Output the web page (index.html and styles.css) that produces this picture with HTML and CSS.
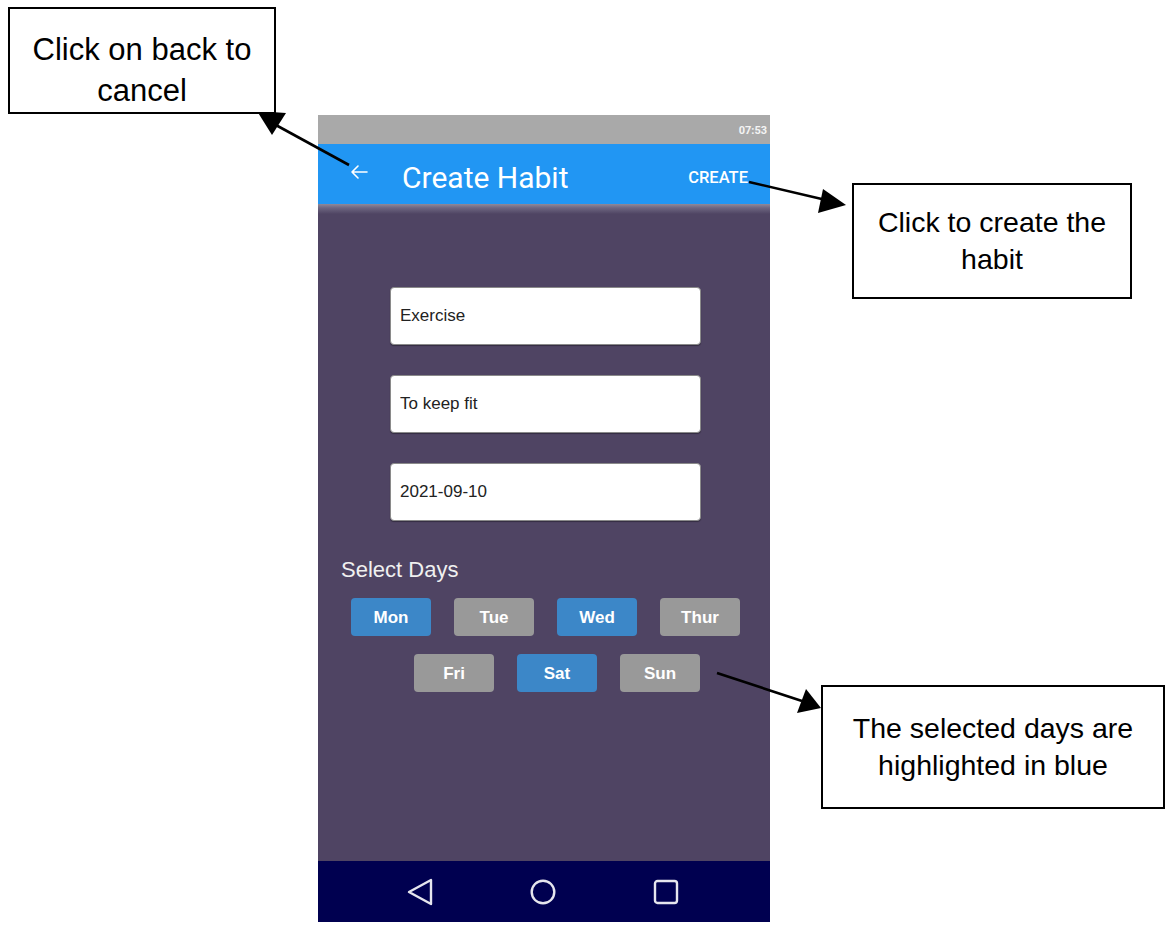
FILE: index.html
```html
<!DOCTYPE html>
<html>
<head>
<meta charset="utf-8">
<link rel="stylesheet" href="styles.css">
</head>
<body>
<div class="stage">
  <div class="phone">
    <div class="statusbar"><span class="time">07:53</span></div>
    <div class="appbar">
      <svg class="back" width="20" height="16" viewBox="0 0 20 16">
        <path d="M18 8 H3 M9 2 L3 8 L9 14" fill="none" stroke="#fff" stroke-width="1.6" stroke-linecap="round" stroke-linejoin="round"/>
      </svg>
      <span class="title">Create Habit</span>
      <span class="create">CREATE</span>
    </div>
    <div class="content">
      <input class="field" type="text" value="Exercise">
      <input class="field" type="text" value="To keep fit">
      <input class="field" type="text" value="2021-09-10">
      <div class="label">Select Days</div>
      <div class="days row1">
        <span class="day on">Mon</span>
        <span class="day">Tue</span>
        <span class="day on">Wed</span>
        <span class="day">Thur</span>
      </div>
      <div class="days row2">
        <span class="day">Fri</span>
        <span class="day on">Sat</span>
        <span class="day">Sun</span>
      </div>
    </div>
    <div class="navbar">
      <svg width="26" height="28" viewBox="0 0 26 28"><path d="M24 2 L24 26 L2 14 Z" fill="none" stroke="#e6e6ee" stroke-width="2.4" stroke-linejoin="round"/></svg>
      <svg width="26" height="26" viewBox="0 0 26 26"><circle cx="13" cy="13" r="11.3" fill="none" stroke="#e6e6ee" stroke-width="2.4"/></svg>
      <svg width="26" height="26" viewBox="0 0 26 26"><rect x="2" y="2" width="22" height="22" rx="2.5" fill="none" stroke="#e6e6ee" stroke-width="2.4"/></svg>
    </div>
  </div>

  <svg class="arrows" width="1166" height="925" viewBox="0 0 1166 925">
    <line x1="349" y1="165" x2="274" y2="124" stroke="#000" stroke-width="2.6"/>
    <polygon points="257,111 286,113 272,135" fill="#000"/>
    <line x1="749" y1="182" x2="826" y2="200" stroke="#000" stroke-width="2.6"/>
    <polygon points="846,205 823,189 818,213" fill="#000"/>
    <line x1="717" y1="673" x2="802" y2="701" stroke="#000" stroke-width="2.6"/>
    <polygon points="821,708 806,689 797,713" fill="#000"/>
  </svg>

  <div class="note note1">Click on back to<br>cancel</div>
  <div class="note note2">Click to create the<br>habit</div>
  <div class="note note3">The selected days are<br>highlighted in blue</div>
</div>
</body>
</html>
```

FILE: styles.css
```css
html, body {
  margin: 0;
  padding: 0;
  background: #fff;
}

.stage {
  position: relative;
  width: 1166px;
  height: 925px;
  overflow: hidden;
  padding: 115px 0 0 318px;
  box-sizing: border-box;
}

.phone {
  width: 452px;
  height: 807px;
  display: flex;
  flex-direction: column;
  background: #4f4463;
}

.statusbar {
  height: 29px;
  background: #a9a9a9;
  display: flex;
  align-items: center;
  justify-content: flex-end;
  padding-right: 3px;
}

.time {
  font-family: Roboto, "Liberation Sans", sans-serif;
  font-size: 11px;
  font-weight: 700;
  color: #f4f4f4;
  margin-top: 1px;
}

.appbar {
  height: 60px;
  background: #2196f3;
  display: flex;
  align-items: center;
  padding: 0 22px 0 31px;
  color: #fff;
  font-family: Roboto, "Liberation Sans", sans-serif;
}

.back {
  margin-top: -5px;
}

.title {
  margin-left: 33px;
  font-size: 30px;
  flex: 1;
  margin-top: 6px;
}

.create {
  font-size: 16.5px;
  font-weight: 500;
  margin-top: 6px;
}

.content {
  flex: 1;
  display: flex;
  flex-direction: column;
  padding-top: 83px;
  background: linear-gradient(to bottom, #8f8999 0px, #6d6580 4px, #4f4463 10px, #4f4463 100%);
}

.field {
  display: block;
  box-sizing: border-box;
  width: 311px;
  height: 58px;
  margin: 0 0 30px 72px;
  padding: 0 9px;
  border: 1px solid #8a8a8a;
  border-radius: 4px;
  background: #fff;
  box-shadow: 0 1px 1px rgba(0, 0, 0, 0.35);
  font-family: "Liberation Sans", Arial, sans-serif;
  font-size: 17px;
  color: #222;
  outline: none;
}

.label {
  margin: 6px 0 0 23px;
  font-family: "Liberation Sans", Arial, sans-serif;
  font-size: 22px;
  line-height: 26px;
  color: #f0f0f0;
}

.days {
  display: flex;
  gap: 23px;
}

.row1 {
  margin: 15px 0 0 33px;
}

.row2 {
  margin: 18px 0 0 96px;
}

.day {
  box-sizing: border-box;
  width: 80px;
  height: 38px;
  padding-top: 2px;
  border-radius: 4px;
  background: #999999;
  color: #fff;
  font-family: "Liberation Sans", Arial, sans-serif;
  font-weight: 700;
  font-size: 17px;
  display: flex;
  align-items: center;
  justify-content: center;
}

.day.on {
  background: #3c87c8;
}

.navbar {
  height: 61px;
  background: #000050;
  display: flex;
  align-items: center;
  gap: 97px;
  padding-left: 89px;
}

.arrows {
  position: absolute;
  left: 0;
  top: 0;
}

.note {
  position: absolute;
  box-sizing: border-box;
  background: #fff;
  border: 2px solid #000;
  font-family: "Liberation Sans", Arial, sans-serif;
  color: #000;
  text-align: center;
  display: flex;
  align-items: center;
  justify-content: center;
}

.note1 {
  left: 8px;
  top: 7px;
  width: 268px;
  height: 107px;
  padding-top: 18px;
  font-size: 31px;
  line-height: 41px;
}

.note2 {
  left: 852px;
  top: 183px;
  width: 280px;
  height: 116px;
  font-size: 28.5px;
  line-height: 37px;
}

.note3 {
  left: 821px;
  top: 685px;
  width: 344px;
  height: 124px;
  font-size: 28.5px;
  line-height: 37px;
}
```
